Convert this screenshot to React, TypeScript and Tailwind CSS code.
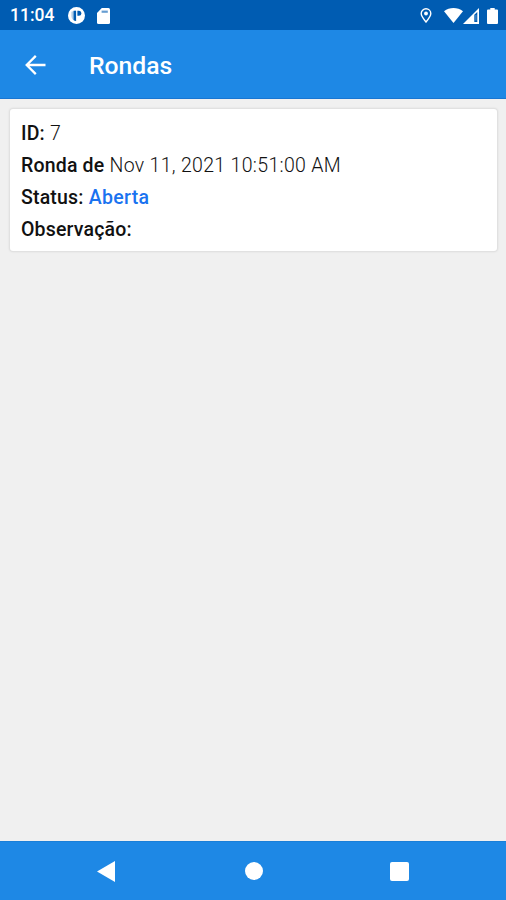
import type { ReactNode } from 'react';

const ronda = {
    id: 7,
    date: 'Nov 11, 2021 10:51:00 AM',
    status: 'Aberta',
};

function StatusBar() {
    return (
        <div className="flex h-[30px] shrink-0 items-center bg-[#005cb2] pt-px pl-[10px] pr-2 text-white">
            <span className="w-[45px] whitespace-nowrap text-[17.5px] leading-none font-medium">11:04</span>

            {/* Notification icons */}
            <svg className="ml-[13px] h-[17px] w-[17px]" viewBox="0 0 17 17">
                <circle cx="8.5" cy="8.5" r="8.5" fill="#fff" />
                <path d="M3.400 4.800L7.800 3.600v10.600C5 13.600 3.400 11.500 3.400 9z" fill="#005cb2" opacity=".3" />
                <path d="M5.600 3.800h2.500v10.300c-1-.2-1.800-.6-2.500-1.100z" fill="#005cb2" />
                <path d="M9.400 3.800h1.400a2.500 2.500 0 0 1 0 5H9.400z" fill="#005cb2" />
            </svg>
            <svg className="ml-3 h-4 w-[13px]" viewBox="0 0 13 16">
                <path d="M4.800 0H11.500A1.500 1.500 0 0 1 13 1.500v13a1.500 1.500 0 0 1-1.500 1.500h-10A1.500 1.500 0 0 1 0 14.500V5z" fill="#fff" />
                <path d="M4.600 2.600h6.200v2.200H4.600z" fill="#005cb2" opacity=".6" />
            </svg>

            {/* System icons */}
            <svg className="ml-auto h-[15px] w-3" viewBox="0 0 12 15" fill="none" stroke="#fff" strokeWidth="1.4">
                <path d="M6 14C3.200 10.700 1.200 8 1.200 5.600a4.800 4.800 0 0 1 9.600 0C10.800 8 8.800 10.700 6 14z" />
                <circle cx="6" cy="5.500" r="1.900" fill="#fff" stroke="none" />
            </svg>
            <svg className="ml-3 h-[15px] w-[19px]" viewBox="0 0 19 15">
                <path d="M0 3.200C5.500-1 13.500-1 19 3.200L9.500 15z" fill="#fff" />
            </svg>
            <svg className="h-4 w-4" viewBox="0 0 16 16">
                <path d="M0 16L16 0v16z" fill="#fff" />
                <path d="M11.300 6.800L14.300 3.900v10.100h-3z" fill="#005cb2" />
                <path d="M12.400 7h1v5.500h-1z" fill="#fff" opacity=".35" />
            </svg>
            <svg className="ml-2 h-4 w-[11px]" viewBox="0 0 11 16">
                <path d="M3.300 0h4.400v1.600H10a1 1 0 0 1 1 1V15a1 1 0 0 1-1 1H1a1 1 0 0 1-1-1V2.600a1 1 0 0 1 1-1h2.300z" fill="#fff" />
            </svg>
        </div>
    );
}

function Field({ label, children }: { label: string; children?: ReactNode }) {
    return (
        <p className="h-8 whitespace-nowrap text-[19.5px] leading-8 font-light tracking-[0.32px]">
            <span className="font-medium tracking-[0.18px]">{label}</span> {children}
        </p>
    );
}

export default function App() {
    return (
        <div className="flex h-[900px] w-[506px] flex-col bg-[#f0f0f0] font-[Roboto,sans-serif] text-[#111]">
            <StatusBar />

            {/* Toolbar */}
            <header className="flex h-[69px] shrink-0 items-center border-b border-[#1976d2] bg-[#1e88e5] pl-[25px] text-white">
                <svg className="mt-px h-5 w-[21px]" viewBox="0 0 21 20" fill="none" stroke="#fff" strokeWidth="2.300">
                    <path d="M20.500 10H2M10.800 .9L1.700 10l9.100 9.100" />
                </svg>
                <h1 className="ml-[43px] pt-1 text-[24.7px] leading-8 font-medium">Rondas</h1>
            </header>

            <main className="flex-1 px-[10px] pt-[10px]">
                <div className="mr-[-1px] h-[142px] rounded-[3px] bg-white px-[11px] pt-[9px] shadow-[0_0_2px_1px_rgba(0,0,0,0.09)]">
                    <Field label="ID:">{ronda.id}</Field>
                    <Field label="Ronda de">{ronda.date}</Field>
                    <Field label="Status:">
                        <span className="font-medium text-[#1a73f0]">{ronda.status}</span>
                    </Field>
                    <Field label="Observação:" />
                </div>
            </main>

            {/* Navigation bar */}
            <nav className="flex h-[59px] shrink-0 items-center border-t border-[#1a7fd8] bg-[#1e88e5] pl-[97px]">
                <svg className="h-[21px] w-[18px]" viewBox="0 0 18 21">
                    <path d="M0 10.500L18 0v21z" fill="#fff" />
                </svg>
                <span className="ml-[130px] h-[18px] w-[18px] rounded-full bg-white" />
                <span className="ml-[127px] h-[19px] w-[19px] rounded-[2px] bg-white" />
            </nav>
        </div>
    );
}
